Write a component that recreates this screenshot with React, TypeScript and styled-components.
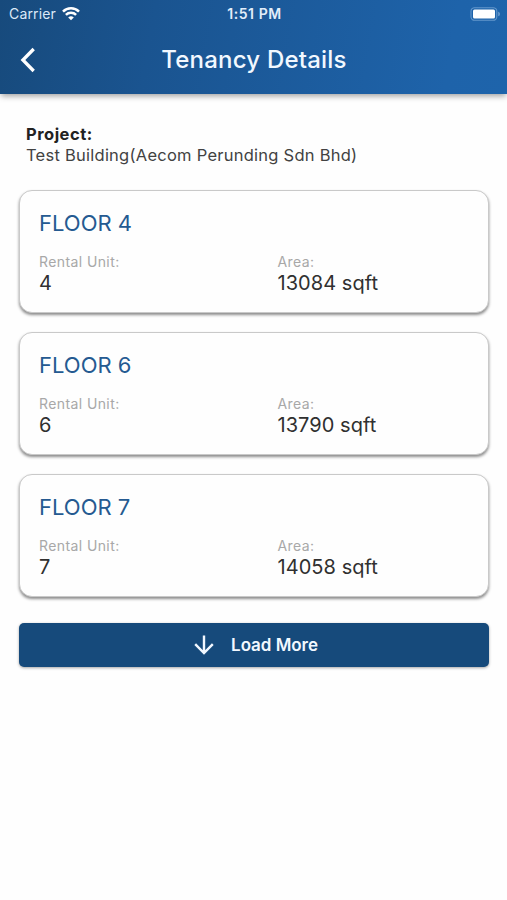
import React from "react";
import styled, { createGlobalStyle } from "styled-components";

const GlobalStyle = createGlobalStyle`
  * { box-sizing: border-box; }
  body { margin: 0; background: #fefefe; font-family: Inter, "Liberation Sans", sans-serif; color: #303030; }
  h1, h2, p, dl, dt, dd { margin: 0; font-weight: 400; }
`;

const Screen = styled.div`
  width: 507px;
  height: 900px;
  overflow: hidden;
  background: #fefefe;
`;

const Header = styled.header`
  height: 94px;
  color: #f2f8ff;
  background: linear-gradient(100deg, #174a7c 0%, #1a5490 30%, #1e63aa 88%, #1e64ab 100%);
  box-shadow: 0 3px 6px -1px rgba(0, 0, 0, 0.38);
`;

const StatusBar = styled.div`
  display: grid;
  grid-template-columns: 1fr auto 1fr;
  align-items: center;
  height: 27px;
  padding: 0 7px 0 9px;
  font-size: 14px;
  line-height: 16px;
`;

const Carrier = styled.span`
  display: flex;
  align-items: center;
  gap: 6px;
  letter-spacing: 0.15px;
  color: #dce9f8;
`;

const Clock = styled.span`
  font-weight: 600;
  letter-spacing: 0.55px;
  color: #e2edfa;
`;

const Battery = styled.span`
  display: flex;
  justify-content: flex-end;
`;

const NavBar = styled.div`
  display: grid;
  grid-template-columns: 60px 1fr 60px;
  align-items: center;
  height: 66px;
`;

const BackButton = styled.button`
  display: flex;
  padding: 0 0 0 20px;
  border: 0;
  background: none;
  color: #fff;
`;

const Title = styled.h1`
  text-align: center;
  font-size: 24px;
  font-weight: 500;
  line-height: 30px;
  letter-spacing: 0.2px;
  padding-left: 1px;
`;

const Content = styled.main`
  padding: 30px 18px 0 19px;
`;

const Project = styled.section`
  padding-left: 7px;
  margin-bottom: 24px;
  font-size: 16.5px;
  line-height: 21px;
`;

const ProjectLabel = styled.p`
  font-weight: 700;
  color: #222;
  letter-spacing: 0.5px;
`;

const ProjectName = styled.p`
  color: #424242;
  letter-spacing: 0.25px;
`;

const CardList = styled.div`
  display: grid;
  gap: 19px;
`;

const Card = styled.article`
  height: 123px;
  padding: 18px 19px;
  border: 1px solid #c9c9c9;
  border-radius: 13px;
  background: #fefefe;
  box-shadow: 0 2px 3px rgba(0, 0, 0, 0.45);
`;

const FloorName = styled.h2`
  font-size: 22px;
  line-height: 28px;
  color: #255a91;
`;

const Facts = styled.dl`
  display: grid;
  grid-template-columns: 238.5px 1fr;
  margin-top: 16px;
`;

const FactLabel = styled.dt`
  font-size: 14px;
  line-height: 18px;
  letter-spacing: 0.4px;
  color: #a8a8a8;
`;

const FactValue = styled.dd`
  font-size: 20px;
  line-height: 25px;
  letter-spacing: 0.05px;
  color: #303030;
`;

const LoadMore = styled.button`
  display: flex;
  align-items: center;
  justify-content: center;
  gap: 17px;
  width: 100%;
  height: 44px;
  margin-top: 26px;
  padding: 0 0 0 4px;
  border: 0;
  border-radius: 5px;
  background: #164a7b;
  box-shadow: 0 1px 3px rgba(0, 0, 0, 0.35);
  color: #f2f8ff;
  font: 600 17px/22px Inter, "Liberation Sans", sans-serif;
  letter-spacing: -0.05px;
`;

const floors = [
  { unit: "4", area: "13084 sqft" },
  { unit: "6", area: "13790 sqft" },
  { unit: "7", area: "14058 sqft" },
];

const WifiIcon = () => (
  <svg width="18" height="14" viewBox="0 0 18 14" fill="none" stroke="#fff" strokeWidth="2.5">
    <path d="M1 4.6a11.3 11.3 0 0 1 16 0" />
    <path d="M3.9 7.8a7.2 7.2 0 0 1 10.2 0" />
    <path d="M9 13.3 6.2 10.5a4 4 0 0 1 5.6 0Z" fill="#fff" stroke="none" />
  </svg>
);

const BatteryIcon = () => (
  <svg width="30" height="14" viewBox="0 0 30 14" fill="none">
    <rect x="1" y=".7" width="25.8" height="12.6" rx="3.6" stroke="#6397cb" strokeWidth="1.1" />
    <rect x="3" y="2.4" width="22" height="9.2" rx="1.5" fill="#fff" />
    <path d="M28.3 4.7c2 .6 2 4 0 4.6Z" fill="#79a5d3" />
  </svg>
);

const BackIcon = () => (
  <svg width="16" height="26" viewBox="0 0 16 26" fill="none" stroke="currentColor" strokeWidth="3.3">
    <path d="M13.7 2 2.9 13l10.8 11" />
  </svg>
);

const ArrowDownIcon = () => (
  <svg width="20" height="20" viewBox="0 0 20 20" fill="none" stroke="currentColor" strokeWidth="2.4">
    <path d="M10 .5V18M1.2 9.2 10 18l8.8-8.8" />
  </svg>
);

export default function App() {
  return (
    <Screen>
      <GlobalStyle />
      <Header>
        <StatusBar>
          <Carrier>Carrier <WifiIcon /></Carrier>
          <Clock>1:51 PM</Clock>
          <Battery><BatteryIcon /></Battery>
        </StatusBar>
        <NavBar>
          <BackButton aria-label="Back"><BackIcon /></BackButton>
          <Title>Tenancy Details</Title>
        </NavBar>
      </Header>
      <Content>
        <Project>
          <ProjectLabel>Project:</ProjectLabel>
          <ProjectName>Test Building(Aecom Perunding Sdn Bhd)</ProjectName>
        </Project>
        <CardList>
          {floors.map(({ unit, area }) => (
            <Card key={unit}>
              <FloorName>FLOOR {unit}</FloorName>
              <Facts>
                <div>
                  <FactLabel>Rental Unit:</FactLabel>
                  <FactValue>{unit}</FactValue>
                </div>
                <div>
                  <FactLabel>Area:</FactLabel>
                  <FactValue>{area}</FactValue>
                </div>
              </Facts>
            </Card>
          ))}
        </CardList>
        <LoadMore><ArrowDownIcon />Load More</LoadMore>
      </Content>
    </Screen>
  );
}
